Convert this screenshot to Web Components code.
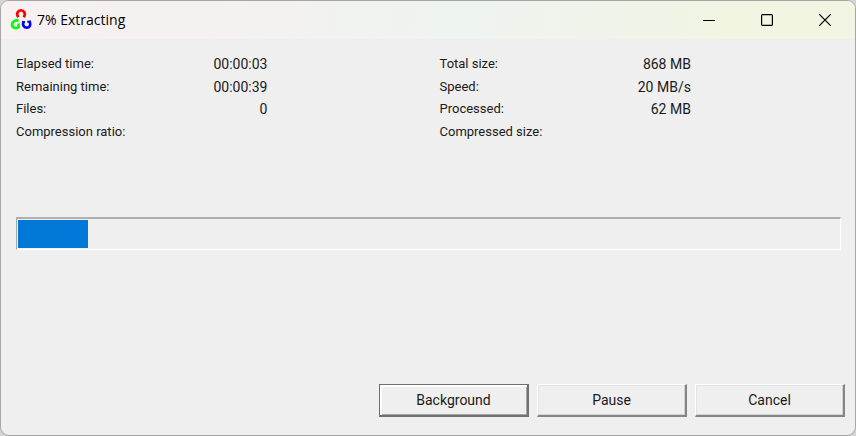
<!DOCTYPE html>
<html lang="en">
<head>
<meta charset="utf-8">
<title>7% Extracting</title>
<style>
  html, body { height: 100%; margin: 0; }
  body { background: #d4d4d4; }
</style>
</head>
<body>
<app-window name="7% Extracting">
  <stat-columns></stat-columns>
  <progress-bar value="70" max="820" label="Extraction progress"></progress-bar>
  <button-row>
    <push-button label="Background" primary></push-button>
    <push-button label="Pause"></push-button>
    <push-button label="Cancel"></push-button>
  </button-row>
</app-window>

<script>
class AppWindow extends HTMLElement {
  constructor() {
    super();
    this.attachShadow({ mode: "open" });
  }

  get name() {
    return this.getAttribute("name");
  }

  Render() {
    return `
      <style>
        :host {
          display: flex;
          flex-direction: column;
          box-sizing: border-box;
          min-height: 100%;
          border: 1px solid #a6a6a6;
          border-radius: 9px;
          overflow: hidden;
          background: #efefef;
          color: #1a1a1a;
          font: 14px/22px Roboto, "Liberation Sans", sans-serif;
        }
        header {
          display: flex;
          align-items: center;
          height: 38px;
          padding: 0 1px 0 9px;
          background: linear-gradient(100deg, #f7f1f1 0%, #f5f1f1 25%, #eef4ef 52%, #eff4ea 72%, #f2f5e1 86%, #f2f5e1 100%);
        }
        .logo { width: 22px; height: 22px; }
        h1 {
          flex: 1;
          margin: 0 0 0 5px;
          font: 14px/20px "Open Sans", "Noto Sans", sans-serif;
          color: #000;
        }
        nav { display: flex; }
        nav button {
          display: grid;
          place-items: center;
          width: 58px;
          height: 38px;
          padding: 0;
          border: 0;
          background: none;
        }
        nav svg { fill: none; stroke: #000; }
        main {
          flex: 1;
          display: flex;
          flex-direction: column;
          padding: 14px 10px 18px 15px;
        }
      </style>
      <header>
        <svg class="logo" viewBox="0 0 22 22" fill="none" stroke-width="2.7" aria-hidden="true">
          <path stroke="#f00" d="M8.300 8.300C5.800 4.300 8 1.400 11 1.400C14 1.400 16.200 4.300 13.700 8.300"/>
          <path stroke="#0f0" d="M8.500 11.600C5 11 2 12.800 2 15.500C2 18.500 5.500 20.500 8.600 18V14.500"/>
          <path stroke="#00f" d="M13.800 12.300C12 16 14 18.700 16.700 18.700C20 18.700 21.200 15.500 19.300 11.800"/>
          <path stroke="#00f" stroke-width="2" d="M12 13H15M17.300 12.800H21"/>
        </svg>
        <h1>${this.name}</h1>
        <nav>
          <button type="button" aria-label="Minimize">
            <svg width="12" height="12"><path d="M0 6.500H12"/></svg>
          </button>
          <button type="button" aria-label="Maximize">
            <svg width="12" height="12"><rect x=".6" y=".6" width="10.800" height="10.800" rx="1" stroke-width="1.200"/></svg>
          </button>
          <button type="button" aria-label="Close">
            <svg width="12" height="12"><path d="M0 0 12 12M12 0 0 12" stroke-width="1.200"/></svg>
          </button>
        </nav>
      </header>
      <main><slot></slot></main>
    `;
  }

  connectedCallback() {
    this.shadowRoot.innerHTML = this.Render();
  }
}

class StatColumns extends HTMLElement {
  constructor() {
    super();
    this.attachShadow({ mode: "open" });
    this.columns = [
      [
        ["Elapsed time:", "00:00:03"],
        ["Remaining time:", "00:00:39"],
        ["Files:", "0"],
        ["Compression ratio:", ""],
      ],
      [
        ["Total size:", "868 MB"],
        ["Speed:", "20 MB/s"],
        ["Processed:", "62 MB"],
        ["Compressed size:", ""],
      ],
    ];
  }

  Render() {
    return `
      <style>
        :host {
          display: grid;
          grid-template-columns: 1fr 1fr;
          column-gap: 18px;
        }
        dl {
          display: flex;
          flex-direction: column;
          justify-content: space-between;
          width: 62%;
          height: 90px;
          margin: 0;
        }
        div { display: flex; justify-content: space-between; height: 22px; }
        dt, dd { margin: 0; white-space: nowrap; }
        dt { font-size: 13px; }
      </style>
      ${this.columns.map((rows) => `
        <dl>
          ${rows.map(([label, value]) => `<div><dt>${label}</dt><dd>${value}</dd></div>`).join("")}
        </dl>
      `).join("")}
    `;
  }

  connectedCallback() {
    this.shadowRoot.innerHTML = this.Render();
  }
}

class ProgressBar extends HTMLElement {
  constructor() {
    super();
    this.attachShadow({ mode: "open" });
  }

  Render() {
    const max = this.getAttribute("max");
    const value = this.getAttribute("value");
    return `
      <style>
        :host { display: block; margin: 74px 4px 0 0; }
        progress {
          display: block;
          appearance: none;
          box-sizing: border-box;
          width: 100%;
          height: 33px;
          padding: 1px;
          border: 1px solid;
          border-width: 2px 1px 1px;
          border-color: #b0b0b0 #fff #fff #a6a6a6;
          background: #efefef;
        }
        progress::-webkit-progress-bar { background: #efefef; }
        progress::-webkit-progress-value { background: #0078d7; }
      </style>
      <progress value="${value}" max="${max}" aria-label="${this.getAttribute("label")}"></progress>
    `;
  }

  connectedCallback() {
    this.shadowRoot.innerHTML = this.Render();
  }
}

class ButtonRow extends HTMLElement {
  constructor() {
    super();
    this.attachShadow({ mode: "open" });
  }

  connectedCallback() {
    this.shadowRoot.innerHTML = `
      <style>
        :host {
          display: flex;
          justify-content: flex-end;
          gap: 8px;
          margin-top: auto;
        }
      </style>
      <slot></slot>
    `;
  }
}

class PushButton extends HTMLElement {
  constructor() {
    super();
    this.attachShadow({ mode: "open" });
  }

  Render() {
    return `
      <style>
        :host { display: block; }
        button {
          box-sizing: border-box;
          width: 150px;
          height: 33px;
          padding: 0;
          border: 1px solid;
          border-width: 1px 2px 2px 1px;
          border-color: #fff #858585 #858585 #fff;
          box-shadow: inset -1px -1px #d4d4d4, inset 1px 1px #e4e4e4;
          background: #efefef;
          font: inherit;
          color: inherit;
        }
        :host([primary]) button {
          border-color: #707070;
          box-shadow: inset 2px 2px #fff, inset -1px -1px #a6a6a6;
        }
      </style>
      <button type="button">${this.getAttribute("label")}</button>
    `;
  }

  connectedCallback() {
    this.shadowRoot.innerHTML = this.Render();
  }
}

window.customElements.define("app-window", AppWindow);
window.customElements.define("stat-columns", StatColumns);
window.customElements.define("progress-bar", ProgressBar);
window.customElements.define("button-row", ButtonRow);
window.customElements.define("push-button", PushButton);
</script>
</body>
</html>
